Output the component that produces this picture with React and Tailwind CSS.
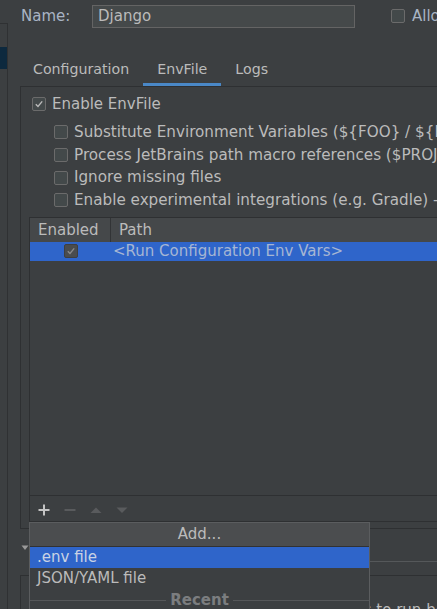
const FONT = { fontFamily: '"DejaVu Sans", "Liberation Sans", sans-serif' };

const OPTIONS = [
  'Substitute Environment Variables (${FOO} / ${BAR:-default} / $${ESCAPED})',
  'Process JetBrains path macro references ($PROJECT_DIR$)',
  'Ignore missing files',
  'Enable experimental integrations (e.g. Gradle) - may break any time!',
];

function Check({ checked, muted }) {
  return (
    <span
      className={
        'flex h-[14px] w-[14px] shrink-0 items-center justify-center rounded-[2px] border ' +
        (muted ? 'border-[#3f3f3f] bg-[#4a4c4e]' : 'border-[#6b6b6b] bg-[#43494a]')
      }
    >
      {checked ? (
        <svg width="10" height="10" viewBox="0 0 10 10">
          <path d="M1.8 5.2 L4 7.4 L8.2 2.4" fill="none" stroke={muted ? '#8a8a8a' : '#bbbbbb'} strokeWidth="1.4" />
        </svg>
      ) : null}
    </span>
  );
}

function Tab({ label, active }) {
  return (
    <div className="relative flex h-[34px] items-center px-[14px] pt-[1px] text-[14.2px] text-[#bbbbbb]">
      {label}
      {active ? <span className="absolute bottom-0 left-0 right-0 h-[3px] bg-[#4a88c7]" /> : null}
    </div>
  );
}

function AddPopup() {
  return (
    <div className="absolute left-[29px] top-[522px] w-[341px] border border-[#5b5d5f] bg-[#3c3f41] text-[15px] text-[#bbbbbb]">
      <div className="flex h-[24px] items-center justify-center border-b border-[#323232] bg-[#4b4d4f]">Add...</div>
      <div className="flex h-[21px] items-center bg-[#2f65ca] pl-[7px] text-[#c9d3e4]">.env file</div>
      <div className="flex h-[21px] items-center pl-[7px]">JSON/YAML file</div>
      <div className="flex h-[22px] items-center gap-[4px]">
        <span className="h-px flex-1 bg-[#555759]" />
        <span className="font-bold text-[#7b7d7f]">Recent</span>
        <span className="h-px flex-1 bg-[#555759]" />
      </div>
    </div>
  );
}

export default function App() {
  return (
    <div className="relative flex h-[609px] w-[437px] overflow-hidden bg-[#3c3f41] text-[#bbbbbb]" style={FONT}>
      <aside className="w-[8px] shrink-0 pt-[23px]">
        <div className="h-full border-r border-t border-[#2f3133]">
          <div className="mt-[23px] h-[22px] bg-[#0d293e]" />
        </div>
      </aside>

      <main className="flex min-w-0 flex-1 flex-col">
        <div className="flex h-[29px] shrink-0 items-center pt-[3px] text-[15px]">
          <span className="ml-[13px] w-[71px] shrink-0 text-[#a9b4c4]">Name:</span>
          <div className="flex h-[23px] w-[263px] shrink-0 items-center border border-[#646464] bg-[#45494a] pl-[5px] text-[#bbbbbb]">Django</div>
          <div className="ml-[36px] flex shrink-0 items-center gap-[7px] whitespace-nowrap">
            <Check />
            <span className="text-[#a9b4c4]">Allow parallel run</span>
          </div>
        </div>

        <div className="mt-[23px] flex shrink-0 pl-[11px]">
          <Tab label="Configuration" />
          <Tab label="EnvFile" active />
          <Tab label="Logs" />
        </div>

        <section className="ml-[12px] flex h-[443px] shrink-0 flex-col border-b border-l border-t border-[#2e3032] pb-[6px]">
          <div className="mt-[10px] flex h-[14px] items-center gap-[6px] pl-[11px] text-[15px] whitespace-nowrap">
            <Check checked />
            <span>Enable EnvFile</span>
          </div>

          <div className="mt-[10px] flex flex-col pl-[33px] text-[15.2px]">
            {OPTIONS.map((opt) => (
              <div key={opt} className="flex h-[22.7px] items-center gap-[6px] whitespace-nowrap">
                <Check />
                <span>{opt}</span>
              </div>
            ))}
          </div>

          <div className="ml-[8px] mt-[5px] flex flex-1 flex-col border-b border-l border-t border-[#2e3032] text-[15px]">
            <div className="flex h-[24px] items-center bg-[#45484a] whitespace-nowrap">
              <div className="flex h-full w-[81px] items-center border-r border-[#323436] pl-[8px]">Enabled</div>
              <div className="pl-[8px]">Path</div>
            </div>
            <div className="flex h-[19px] items-center bg-[#2f65ca] whitespace-nowrap">
              <div className="flex w-[81px] justify-center pl-[1px]">
                <Check checked muted />
              </div>
              <div className="pl-[2px] text-[#a6b6d3]">&lt;Run Configuration Env Vars&gt;</div>
            </div>
            <div className="flex-1 border-b border-[#2e3032]" />
            <div className="flex h-[25px] items-center gap-[12px] pl-[7px] pt-[2px]">
              <svg width="14" height="14" viewBox="0 0 14 14">
                <path d="M7 1.5 V12.5 M1.5 7 H12.5" stroke="#c4c4c4" strokeWidth="2" />
              </svg>
              <svg width="14" height="14" viewBox="0 0 14 14">
                <path d="M1.5 7 H12.5" stroke="#595b5d" strokeWidth="2" />
              </svg>
              <svg width="14" height="14" viewBox="0 0 14 14">
                <path d="M1.5 10 L7 4.5 L12.5 10 Z" fill="#595b5d" />
              </svg>
              <svg width="14" height="14" viewBox="0 0 14 14">
                <path d="M1.5 4.5 L7 10 L12.5 4.5 Z" fill="#595b5d" />
              </svg>
            </div>
          </div>
        </section>

        <div className="flex h-[32px] shrink-0 items-center">
          <svg width="8" height="6" viewBox="0 0 8 6" className="ml-[13px] mt-[6px]">
            <path d="M0.5 0.5 L7.5 0.5 L4 5 Z" fill="#9a9a9a" />
          </svg>
          <div className="ml-auto mt-[32px] h-px w-[70px] bg-[#55585a]" />
        </div>
        <div className="ml-[12px] mt-[14px] flex-1 shrink-0 border-l border-t border-[#2e3032] pl-[211px] pt-[23px] text-[15px] whitespace-nowrap">
          There are no tasks to run before launch
        </div>
      </main>

      <AddPopup />
    </div>
  );
}
